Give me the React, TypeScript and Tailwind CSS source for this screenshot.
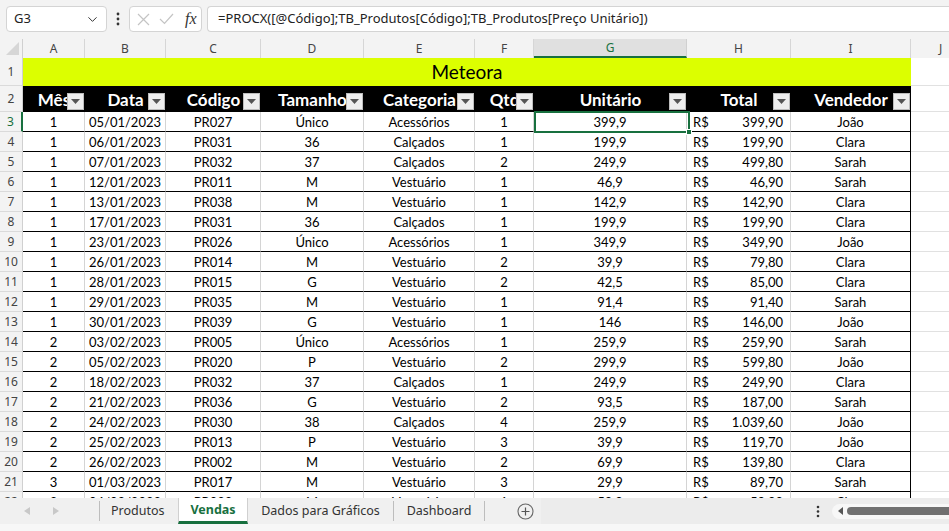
import { ChevronDown } from "lucide-react";

const W = [
  "w-[62px]",
  "w-[81px]",
  "w-[95px]",
  "w-[103px]",
  "w-[111px]",
  "w-[59px]",
  "w-[153px]",
  "w-[104px]",
  "w-[120px]",
];

const LETTERS = ["A", "B", "C", "D", "E", "F", "G", "H", "I"];

const HEADERS = ["Mês", "Data", "Código", "Tamanho", "Categoria", "Qtd", "Unitário", "Total", "Vendedor"];

// mes, data, codigo, tamanho, categoria, qtd, unitario, total, vendedor
const ROWS: string[][] = [
  ["1", "05/01/2023", "PR027", "Único", "Acessórios", "1", "399,9", "399,90", "João"],
  ["1", "06/01/2023", "PR031", "36", "Calçados", "1", "199,9", "199,90", "Clara"],
  ["1", "07/01/2023", "PR032", "37", "Calçados", "2", "249,9", "499,80", "Sarah"],
  ["1", "12/01/2023", "PR011", "M", "Vestuário", "1", "46,9", "46,90", "Sarah"],
  ["1", "13/01/2023", "PR038", "M", "Vestuário", "1", "142,9", "142,90", "Clara"],
  ["1", "17/01/2023", "PR031", "36", "Calçados", "1", "199,9", "199,90", "Clara"],
  ["1", "23/01/2023", "PR026", "Único", "Acessórios", "1", "349,9", "349,90", "João"],
  ["1", "26/01/2023", "PR014", "M", "Vestuário", "2", "39,9", "79,80", "Clara"],
  ["1", "28/01/2023", "PR015", "G", "Vestuário", "2", "42,5", "85,00", "Clara"],
  ["1", "29/01/2023", "PR035", "M", "Vestuário", "1", "91,4", "91,40", "Sarah"],
  ["1", "30/01/2023", "PR039", "G", "Vestuário", "1", "146", "146,00", "João"],
  ["2", "03/02/2023", "PR005", "Único", "Acessórios", "1", "259,9", "259,90", "Sarah"],
  ["2", "05/02/2023", "PR020", "P", "Vestuário", "2", "299,9", "599,80", "João"],
  ["2", "18/02/2023", "PR032", "37", "Calçados", "1", "249,9", "249,90", "Clara"],
  ["2", "21/02/2023", "PR036", "G", "Vestuário", "2", "93,5", "187,00", "Sarah"],
  ["2", "24/02/2023", "PR030", "38", "Calçados", "4", "259,9", "1.039,60", "João"],
  ["2", "25/02/2023", "PR013", "P", "Vestuário", "3", "39,9", "119,70", "João"],
  ["2", "26/02/2023", "PR002", "M", "Vestuário", "2", "69,9", "139,80", "Clara"],
  ["3", "01/03/2023", "PR017", "M", "Vestuário", "3", "29,9", "89,70", "Sarah"],
  ["3", "04/03/2023", "PR022", "M", "Vestuário", "1", "59,9", "59,90", "Clara"],
];

function FilterButton() {
  return (
    <div className="absolute right-[1px] bottom-[2px] w-[17px] h-[17px] bg-[#eeeeee] border border-[#bdbdbd] flex items-center justify-center">
      <svg width="9" height="5" viewBox="0 0 9 5">
        <polygon points="0,0 9,0 4.5,5" fill="#555" />
      </svg>
    </div>
  );
}

function RowHeader({ n, active }: { n: number; active?: boolean }) {
  return (
    <div
      className={`w-[23px] shrink-0 h-full flex items-center justify-center bg-[#f3f3f3] border-b border-b-[#dadada] font-['Noto_Sans',sans-serif] text-[12px] ${
        active ? "text-[#18703f] border-r-2 border-r-[#18703f]" : "text-[#444] border-r border-r-[#d0d0d0]"
      }`}
    >
      {n}
    </div>
  );
}

export default function App() {
  return (
    <div className="w-[949px] h-[531px] overflow-hidden bg-[#f3f3f3] flex flex-col">
      {/* formula bar */}
      <div className="h-[39px] shrink-0 flex items-start pt-[6px] pl-[6px] font-['Noto_Sans',sans-serif]">
        <div className="w-[101px] h-[26px] bg-white border border-[#d4d4d4] rounded-[4px] flex items-center justify-between pl-[7px] pr-[6px] text-[13px] text-[#222]">
          <span>G3</span>
          <ChevronDown size={15} strokeWidth={1.6} className="text-[#333]" />
        </div>
        <div className="w-[22px] h-[26px] flex items-center justify-center">
          <svg width="4" height="14" viewBox="0 0 4 14">
            <circle cx="2" cy="2" r="1.4" fill="#333" />
            <circle cx="2" cy="7" r="1.4" fill="#333" />
            <circle cx="2" cy="12" r="1.4" fill="#333" />
          </svg>
        </div>
        <div className="w-[73px] h-[26px] bg-white border border-[#d4d4d4] rounded-[4px] flex items-center pl-[7px] gap-[9px]">
          <svg width="13" height="13" viewBox="0 0 13 13">
            <path d="M1 1 L12 12 M12 1 L1 12" stroke="#c4c4c4" strokeWidth="1.2" fill="none" />
          </svg>
          <svg width="15" height="12" viewBox="0 0 15 12">
            <path d="M1 6 L5.5 10.5 L14 1" stroke="#c4c4c4" strokeWidth="1.2" fill="none" />
          </svg>
          <span className="font-['Liberation_Serif',serif] italic text-[16px] text-[#333] leading-none ml-[2px]">fx</span>
        </div>
        <div className="ml-[5px] flex-1 h-[26px] bg-white border border-r-0 border-[#d4d4d4] rounded-l-[4px] flex items-center pl-[10px] text-[13px] text-[#222] whitespace-nowrap">
          =PROCX([@Código];TB_Produtos[Código];TB_Produtos[Preço Unitário])
        </div>
      </div>

      {/* sheet */}
      <div className="relative h-[459px] shrink-0 overflow-hidden bg-white font-['Lato',sans-serif] text-black">
        {/* column letters */}
        <div className="flex h-[19px] bg-[#f3f3f3] font-['Noto_Sans',sans-serif] text-[12px] text-[#444]">
          <div className="w-[23px] shrink-0 h-full border-r border-r-[#d0d0d0] flex items-end justify-end pr-[3px] pb-[3px]">
            <svg width="13" height="13" viewBox="0 0 13 13">
              <polygon points="13,0 13,13 0,13" fill="#d6d6d6" />
            </svg>
          </div>
          {LETTERS.map((l, i) =>
            i === 6 ? (
              <div
                key={l}
                className={`${W[i]} shrink-0 h-full flex items-center justify-center bg-[#e0e0e0] border-b-2 border-b-[#18703f] border-r border-r-[#d0d0d0] text-[#18703f]`}
              >
                {l}
              </div>
            ) : (
              <div key={l} className={`${W[i]} shrink-0 h-full flex items-center justify-center border-r border-r-[#d6d6d6]`}>
                {l}
              </div>
            )
          )}
          <div className="flex-1 h-full flex items-center pl-[28px]">J</div>
        </div>

        {/* row 1 - title */}
        <div className="flex h-[28px]">
          <RowHeader n={1} />
          <div className="w-[888px] shrink-0 h-full bg-[#dcff00] flex items-center justify-center text-[19px] pt-[1px]">Meteora</div>
          <div className="flex-1 h-full border-b border-b-[#e1e1e1]" />
        </div>

        {/* row 2 - table header */}
        <div className="flex h-[26px]">
          <RowHeader n={2} />
          {HEADERS.map((h, i) => (
            <div
              key={h}
              className={`${W[i]} shrink-0 h-full relative overflow-hidden bg-black text-white font-bold text-[17px] flex items-center justify-center whitespace-nowrap`}
            >
              <span className="pt-[1px]">{h}</span>
              <FilterButton />
            </div>
          ))}
          <div className="flex-1 h-full border-b border-b-[#e1e1e1]" />
        </div>

        {/* data rows */}
        {ROWS.map((r, ri) => (
          <div key={ri} className="flex h-[20px]">
            <RowHeader n={ri + 3} active={ri === 0} />
            {r.map((v, i) => {
              const border = `border-b border-b-black border-r ${i === 8 ? "border-r-black" : "border-r-[#d4d4d4]"}`;
              if (i === 7) {
                return (
                  <div key={i} className={`${W[i]} shrink-0 h-full ${border} flex items-center justify-between pl-[6px] pr-[7px] pt-[2px] text-[13px]`}>
                    <span>R$</span>
                    <span>{v}</span>
                  </div>
                );
              }
              return (
                <div key={i} className={`${W[i]} shrink-0 h-full ${border} flex items-center justify-center pt-[2px] text-[13px] whitespace-nowrap`}>
                  {v}
                </div>
              );
            })}
            <div className="flex-1 h-full border-b border-b-[#e1e1e1]" />
          </div>
        ))}

        {/* selected cell G3 */}
        <div className="absolute left-[534px] top-[72px] w-[156px] h-[22px] border-2 border-[#18703f]">
          <div className="absolute -right-[4px] -bottom-[4px] w-[6px] h-[6px] bg-[#18703f] border border-white" />
        </div>
      </div>

      {/* sheet tabs */}
      <div className="h-[26px] shrink-0 flex items-stretch bg-[#f0f0f0] font-['Noto_Sans',sans-serif] text-[12.5px] text-[#333]">
        <div className="w-[99px] shrink-0 flex items-center">
          <svg width="6" height="8" viewBox="0 0 6 8" className="ml-[24px]">
            <polygon points="6,0 6,8 0,4" fill="#c8c8c8" />
          </svg>
          <svg width="6" height="8" viewBox="0 0 6 8" className="ml-[23px]">
            <polygon points="0,0 0,8 6,4" fill="#c8c8c8" />
          </svg>
        </div>
        <div className="w-[79px] shrink-0 flex items-center border-l border-l-[#bdbdbd] my-[3px]">
          <span className="ml-[11px]">Produtos</span>
        </div>
        <div className="w-[70px] shrink-0 flex items-center justify-center bg-white border-b-[3px] border-b-[#18703f] border-l border-l-[#d0d0d0] border-r border-r-[#d0d0d0] font-bold text-[#18703f]">
          <span className="pt-[2px]">Vendas</span>
        </div>
        <div className="w-[146px] shrink-0 flex items-center justify-center border-r border-r-[#bdbdbd] my-[3px]">
          Dados para Gráficos
        </div>
        <div className="w-[91px] shrink-0 flex items-center justify-center border-r border-r-[#bdbdbd] my-[3px]">
          Dashboard
        </div>
        <div className="w-[56px] shrink-0 flex items-center justify-end pr-[7px]">
          <svg width="17" height="17" viewBox="0 0 17 17">
            <circle cx="8.5" cy="8.5" r="7.5" stroke="#666" strokeWidth="1.1" fill="none" />
            <path d="M8.5 4.5 V12.5 M4.5 8.5 H12.5" stroke="#555" strokeWidth="1.2" />
          </svg>
        </div>
        <div className="flex-1 flex items-center bg-[#ececec]">
          <div className="ml-[275px] w-[4px] flex justify-center">
            <svg width="4" height="13" viewBox="0 0 4 13">
              <circle cx="2" cy="2" r="1.3" fill="#333" />
              <circle cx="2" cy="6.5" r="1.3" fill="#333" />
              <circle cx="2" cy="11" r="1.3" fill="#333" />
            </svg>
          </div>
          <div className="ml-[12px] flex-1 h-[15px] rounded-l-full bg-[#f7f7f7] flex items-center pl-[6px]">
            <svg width="5" height="8" viewBox="0 0 5 8">
              <polygon points="5,0 5,8 0,4" fill="#555" />
            </svg>
            <div className="ml-[4px] flex-1 h-[8px] rounded-l-full bg-[#707070]" />
          </div>
        </div>
      </div>
      <div className="h-[7px] shrink-0 bg-[#f7f7f7]" />
    </div>
  );
}
